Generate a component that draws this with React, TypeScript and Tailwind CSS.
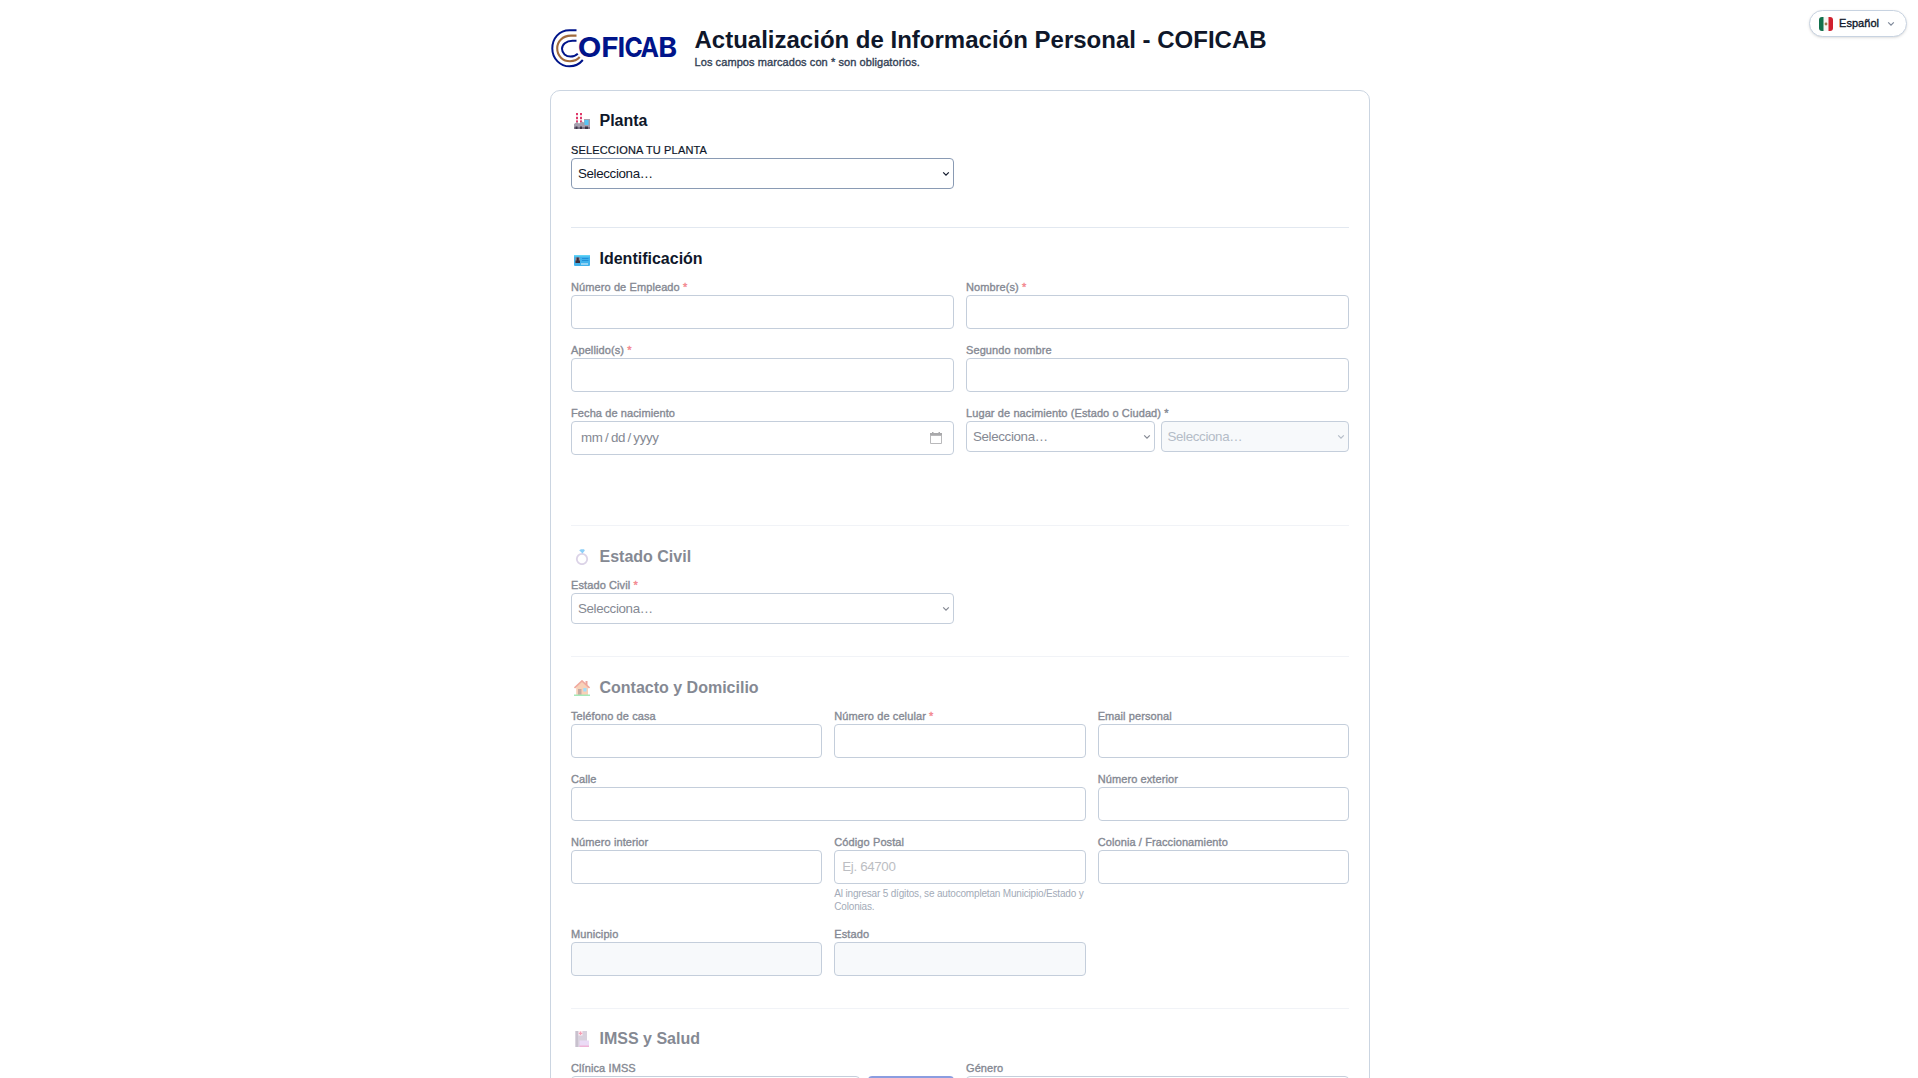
import type { ReactNode } from "react";

const letters = [
  { ch: "O", x: 27.8, s: 1.12 },
  { ch: "F", x: 51.2, s: 1.08 },
  { ch: "I", x: 67.4, s: 1 },
  { ch: "C", x: 74.4, s: 0.9 },
  { ch: "A", x: 90.4, s: 0.9 },
  { ch: "B", x: 108.2, s: 1.04 },
];

function Logo() {
  return (
    <svg width="128" height="40" viewBox="0 0 128 40" fill="none" aria-label="COFICAB">
      <path d="M26.500 2.300H19.500C9 2.300 2.300 10.500 2.300 20.500C2.300 31 10.500 38.300 19.500 38.300C25 38.300 29.500 36 32.800 32" stroke="#00148a" strokeWidth="2" />
      <path d="M26.500 7.600H21C12.500 7.600 7.200 13.500 7.200 20.300C7.200 28 13 33.200 20 33.200C24 33.200 27.500 31.500 29.700 29" stroke="#a06a3c" strokeWidth="2.100" />
      <path d="M26.500 12.800H22.500C16 12.800 12 16.600 12 20.800C12 25.500 16 28.600 20.500 28.600C23.500 28.600 26 27.500 27.800 25.800" stroke="#00148a" strokeWidth="2" />
      {letters.map((l) => (
        <text key={l.ch} transform={`translate(${l.x} 28.6) scale(${l.s} 1)`} fontFamily="Inter, sans-serif" fontWeight="700" fontSize="27.5" fill="#00148a">
          {l.ch}
        </text>
      ))}
    </svg>
  );
}

function Factory() {
  return (
    <svg width="16" height="16" viewBox="0 0 16 16">
      <path d="M2 0h2v10H2zM6 0h2v10H6z" fill="#f4d3dc" />
      <path d="M2 0h2v2H2zM2 4h2v2H2zM2 7.500h2v2H2zM6 0h2v2H6zM6 4h2v2H6zM6 7.500h2v2H6z" fill="#e0396b" />
      <path d="M0 11l3-2 2 1.500 3-2 2 1V6h6v10H0z" fill="#a59fae" />
      <path d="M10.500 7h4v5h-4z" fill="#55c4f5" />
      <path d="M0 14h16v2H0z" fill="#7f778a" />
      <path d="M1.500 13.500h2V16h-2zM6 13.500h2V16H6zM11 13.500h3V16h-3z" fill="#3d3547" />
    </svg>
  );
}

function IdCard() {
  return (
    <svg width="16" height="16" viewBox="0 0 16 16">
      <rect y="4" width="16" height="11" rx="1" fill="#3fb2ec" />
      <path d="M0 5a1 1 0 011-1h14a1 1 0 011 1v.500H0z" fill="#62d5f7" />
      <path d="M1.500 6.500h4.500v5.500H1.500z" fill="#9a8b92" />
      <path d="M2.600 6.500h2.200v3H6V12H1.500V9.500h1.100z" fill="#3a2f3d" />
      <path d="M8 7h6.500v1H8zM8 9h6.500v1H8z" fill="#2191d8" />
      <path d="M7 12.500h7v1H7z" fill="#e6f4fb" />
    </svg>
  );
}

function Ring() {
  return (
    <svg width="16" height="16" viewBox="0 0 16 16" className="opacity-50">
      <circle cx="8" cy="10" r="5.200" fill="none" stroke="#b9a8d0" strokeWidth="1.800" />
      <path d="M5.200 1.200L7 .200h3l.800 1.300L8.500 4.600z" fill="#1fa2f2" />
    </svg>
  );
}

function House() {
  return (
    <svg width="16" height="16" viewBox="0 0 16 16" className="opacity-50">
      <path d="M2.200 7L8 1.500 14 7v8H2.200z" fill="#f2a573" />
      <path d="M11.500 1h2v4h-2z" fill="#d8503f" />
      <path d="M.500 8L8 1l7.500 7" fill="none" stroke="#e2553f" strokeWidth="1.700" />
      <path d="M4 9h3.500v6H4z" fill="#8f5a4a" />
      <path d="M9.300 8h3.200v3.500H9.300z" fill="#45bdf5" />
      <path d="M0 14.500h16V16H0z" fill="#4fd675" />
    </svg>
  );
}

function Hospital() {
  return (
    <svg width="16" height="16" viewBox="0 0 16 16" className="opacity-50">
      <path d="M1.500 0H13v16H1.500z" fill="#b3a5bd" />
      <path d="M1.500 0H4v16H1.500z" fill="#93849f" />
      <path d="M4.500 0h4v4.500h-4z" fill="#f8dde8" />
      <path d="M5.900.500h1.200v3.500H5.900zM4.800 1.700h3.500v1.200H4.800z" fill="#f0406b" />
      <path d="M5.500 9.500H15V16H5.500z" fill="#d9b8ee" />
      <path d="M5.500 14.500h9.500V16H5.500z" fill="#de6bb0" />
    </svg>
  );
}

function Chevron({ className = "" }: { className?: string }) {
  return (
    <svg width="8" height="6" viewBox="0 0 8 6" className={className}>
      <path d="M1.200 1.300L4 4.100l2.800-2.800" fill="none" stroke="currentColor" strokeWidth="1.200" />
    </svg>
  );
}

const box = "w-full rounded-[4px] border text-[13.333px] tracking-[-0.35px]";

function Field({ label, req, children, className = "" }: { label: string; req?: boolean; children: ReactNode; className?: string }) {
  return (
    <div className={className}>
      <label className="block h-[15px] text-[11px] leading-[15px] tracking-[0.1px] whitespace-nowrap text-[#858993] [-webkit-text-stroke:0.35px]">
        {label}
        {req && <span className="text-[#f3878f]"> *</span>}
      </label>
      {children}
    </div>
  );
}

function Input({ disabled, placeholder }: { disabled?: boolean; placeholder?: string }) {
  return (
    <input
      disabled={disabled}
      placeholder={placeholder}
      className={`${box} block h-[34px] border-[#c4cedb] px-[7px] pb-[2px] placeholder:text-[#bcbec3] ${disabled ? "bg-[#f7f9fb]" : "bg-white"}`}
    />
  );
}

function Select({ tone = "soft" }: { tone?: "strong" | "soft" | "off" }) {
  const tones = {
    strong: "border-[#8a9bb4] bg-white text-[#0f172a]",
    soft: "border-[#c4cedb] bg-white text-[#858993]",
    off: "border-[#c4cedb] bg-[#f7f9fb] text-[#b4bcc7]",
  };
  return (
    <button type="button" disabled={tone === "off"} className={`${box} flex h-[31px] items-center justify-between pr-[3px] pl-[6px] ${tones[tone]}`}>
      <span>Selecciona…</span>
      <Chevron />
    </button>
  );
}

function Heading({ icon, children, muted }: { icon: ReactNode; children: ReactNode; muted?: boolean }) {
  return (
    <h2 className={`flex h-[22px] items-center gap-[9.5px] pl-[3px] text-[16px] font-bold ${muted ? "text-[#858993]" : "text-[#0f172a]"}`}>
      <span className="block">{icon}</span>
      <span>{children}</span>
    </h2>
  );
}

export default function App() {
  return (
    <div className="relative h-[1078px] overflow-hidden bg-white pl-[2px] font-['Liberation_Sans',Arial,sans-serif] text-[#0f172a]">
      <button className="absolute top-[10px] right-[11px] flex h-[27px] w-[98px] items-center rounded-full border border-[#c8d3e1] bg-white pl-[9px] text-[11px] shadow-sm">
        <svg width="14" height="14" viewBox="0 0 14 14">
          <rect width="14" height="14" rx="3" fill="#f5f5f3" />
          <path d="M3 0h1.500v14H3a3 3 0 01-3-3V3a3 3 0 013-3z" fill="#11704c" />
          <path d="M11 0H9.500v14H11a3 3 0 003-3V3a3 3 0 00-3-3z" fill="#d0202f" />
          <circle cx="7" cy="7" r="1.400" fill="#9a7b4d" />
        </svg>
        <span className="ml-[6px] w-[41px] text-left tracking-[0.05px] [-webkit-text-stroke:0.35px]">Español</span>
        <Chevron className="ml-[7px] text-[#7c8798]" />
      </button>

      <div className="mx-auto w-[820px]">
        <header className="flex h-[90px] pt-[28px]">
          <Logo />
          <div className="-mt-px ml-[16.5px]">
            <h1 className="h-[26px] text-[24px] leading-[25px] font-bold whitespace-nowrap">Actualización de Información Personal - COFICAB</h1>
            <p className="h-[16px] text-[11px] leading-[18px] tracking-[0.08px] text-[#334155] [-webkit-text-stroke:0.35px]">Los campos marcados con * son obligatorios.</p>
          </div>
        </header>

        <main className="h-[1100px] rounded-[10px] border border-[#cbd5e1] px-[20px] pt-[19px]">
          <section className="h-[118px] border-b border-[#e2e8f0]">
            <Heading icon={<Factory />}>Planta</Heading>
            <div className="mt-[10px] w-[383px]">
              <label className="block h-[16px] text-[11px] leading-[17px] tracking-[0.16px] [-webkit-text-stroke:0.2px]">SELECCIONA TU PLANTA</label>
              <Select tone="strong" />
            </div>
          </section>

          <section className="h-[298px] border-b border-[#f1f3f7] pt-[20px]">
            <Heading icon={<IdCard />}>Identificación</Heading>
            <div className="mt-[10px] grid grid-cols-2 gap-x-3 gap-y-[14px]">
              <Field label="Número de Empleado" req><Input /></Field>
              <Field label="Nombre(s)" req><Input /></Field>
              <Field label="Apellido(s)" req><Input /></Field>
              <Field label="Segundo nombre"><Input /></Field>
              <Field label="Fecha de nacimiento">
                <div className={`${box} flex h-[34px] items-center justify-between border-[#c4cedb] bg-white pr-[11px] pl-[9px] text-[#858993]`}>
                  <span className="whitespace-pre">mm<span className="px-[2.5px]">/</span>dd<span className="px-[2.5px]">/</span>yyyy</span>
                  <svg width="12" height="12" viewBox="0 0 12 12">
                    <path d="M0 1h2V0h1.500v1h5V0H10v1h2v3H0z" fill="#a9a9ab" />
                    <path d="M.500 3.500h11v8H.500z" fill="none" stroke="#b9b9bb" />
                  </svg>
                </div>
              </Field>
              <Field label="Lugar de nacimiento (Estado o Ciudad) *">
                <div className="grid grid-cols-2 gap-[6px]">
                  <Select />
                  <Select tone="off" />
                </div>
              </Field>
            </div>
          </section>

          <section className="h-[131px] border-b border-[#f1f3f7] pt-[20px]">
            <Heading icon={<Ring />} muted>Estado Civil</Heading>
            <Field label="Estado Civil" req className="mt-[10px] w-[383px]"><Select /></Field>
          </section>

          <section className="h-[352px] border-b border-[#f1f3f7] pt-[20px]">
            <Heading icon={<House />} muted>Contacto y Domicilio</Heading>
            <div className="mt-[10px] grid grid-cols-3 gap-x-3 gap-y-[14px]">
              <Field label="Teléfono de casa"><Input /></Field>
              <Field label="Número de celular" req><Input /></Field>
              <Field label="Email personal"><Input /></Field>
              <Field label="Calle" className="col-span-2"><Input /></Field>
              <Field label="Número exterior"><Input /></Field>
              <Field label="Número interior"><Input /></Field>
              <Field label="Código Postal">
                <Input placeholder="Ej. 64700" />
                <p className="mt-[3px] h-[26px] text-[10px] leading-[13px] tracking-[-0.18px] whitespace-nowrap text-[#a3abb8]">
                  Al ingresar 5 dígitos, se autocompletan Municipio/Estado y<br />Colonias.
                </p>
              </Field>
              <Field label="Colonia / Fraccionamiento"><Input /></Field>
              <Field label="Municipio"><Input disabled /></Field>
              <Field label="Estado"><Input disabled /></Field>
            </div>
          </section>

          <section className="pt-[19px]">
            <Heading icon={<Hospital />} muted>IMSS y Salud</Heading>
            <div className="mt-[11px] grid grid-cols-2 gap-x-3">
              <Field label="Clínica IMSS">
                <div className="flex gap-2">
                  <div className="w-[289px]"><Input /></div>
                  <div className="h-[34px] flex-1 rounded-[4px] bg-[#8b9de0]" />
                </div>
              </Field>
              <Field label="Género"><Input /></Field>
            </div>
          </section>
        </main>
      </div>
    </div>
  );
}
